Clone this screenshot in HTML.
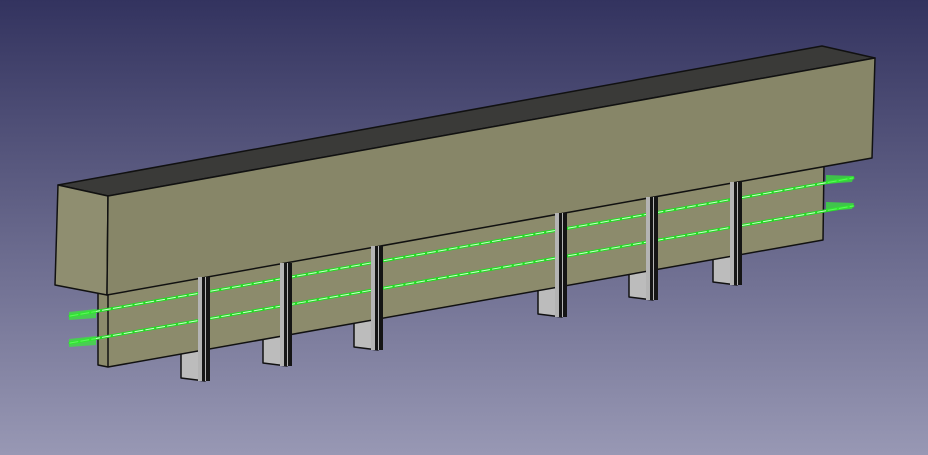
<!DOCTYPE html>
<html><head><meta charset="utf-8"><style>
html,body{margin:0;padding:0;width:928px;height:455px;overflow:hidden}
svg{display:block}
</style></head><body>
<svg width="928" height="455" viewBox="0 0 928 455" xmlns="http://www.w3.org/2000/svg">
<defs>
<linearGradient id="bg" x1="0" y1="0" x2="0" y2="1">
<stop offset="0" stop-color="#33335f"/>
<stop offset="1" stop-color="#9898b4"/>
</linearGradient>
</defs>
<rect width="928" height="455" fill="url(#bg)"/>
<g stroke="#111" stroke-width="1.5" stroke-linejoin="round">
<polygon points="181,352 205,348 205,381 181,378" fill="#bcbcbc"/>
<polygon points="263,337 287,333 287,366 263,363" fill="#bcbcbc"/>
<polygon points="354,321 378,317 378,350 354,347" fill="#bcbcbc"/>
<polygon points="538,288 562,284 562,317 538,314" fill="#bcbcbc"/>
<polygon points="629,272 653,268 653,300 629,297" fill="#bcbcbc"/>
<polygon points="713,257 737,253 737,285 713,282" fill="#bcbcbc"/>
<polygon points="98,293 824,163 823,240 108,367 98,365" fill="#8c8b6c"/>
<line x1="108" y1="295" x2="108" y2="367"/>
<polygon points="58,185 822,46 875,58 108,196" fill="#3a3a38"/>
<polygon points="58,185 108,196 107,295 55,285" fill="#8f8e70"/>
<polygon points="108,196 875,58 872,158 107,295" fill="#878668"/>
</g>
<g stroke-linecap="round">
<line x1="70" y1="316" x2="853" y2="178" stroke="#22dd22" stroke-width="3"/>
<line x1="70" y1="343" x2="853" y2="206" stroke="#22dd22" stroke-width="3"/>
<line x1="70" y1="316" x2="853" y2="178" stroke="#ccffcc" stroke-width="1" stroke-dasharray="8 3"/>
<line x1="70" y1="343" x2="853" y2="206" stroke="#ccffcc" stroke-width="1" stroke-dasharray="8 3"/>
<polygon points="69,312 96,309 96,318 69,320" fill="#33ee33" opacity="0.7"/>
<polygon points="69,339 96,336 96,345 69,347" fill="#33ee33" opacity="0.7"/>
<polygon points="826,175 854,176 852,182 826,184" fill="#33ee33" opacity="0.7"/>
<polygon points="826,202 854,203 852,209 826,211" fill="#33ee33" opacity="0.7"/>
</g>
<g>
<rect x="198" y="277" width="12" height="104" fill="#b4b4b4"/><rect x="202" y="277" width="3" height="104" fill="#151515"/><rect x="206" y="277" width="4" height="104" fill="#151515"/>
<rect x="280" y="263" width="12" height="103" fill="#b4b4b4"/><rect x="284" y="263" width="3" height="103" fill="#151515"/><rect x="288" y="263" width="4" height="103" fill="#151515"/>
<rect x="371" y="246" width="12" height="104" fill="#b4b4b4"/><rect x="375" y="246" width="3" height="104" fill="#151515"/><rect x="379" y="246" width="4" height="104" fill="#151515"/>
<rect x="555" y="213" width="12" height="104" fill="#b4b4b4"/><rect x="559" y="213" width="3" height="104" fill="#151515"/><rect x="563" y="213" width="4" height="104" fill="#151515"/>
<rect x="646" y="197" width="12" height="103" fill="#b4b4b4"/><rect x="650" y="197" width="3" height="103" fill="#151515"/><rect x="654" y="197" width="4" height="103" fill="#151515"/>
<rect x="730" y="182" width="12" height="103" fill="#b4b4b4"/><rect x="734" y="182" width="3" height="103" fill="#151515"/><rect x="738" y="182" width="4" height="103" fill="#151515"/>
</g>
</svg>
</body></html>
